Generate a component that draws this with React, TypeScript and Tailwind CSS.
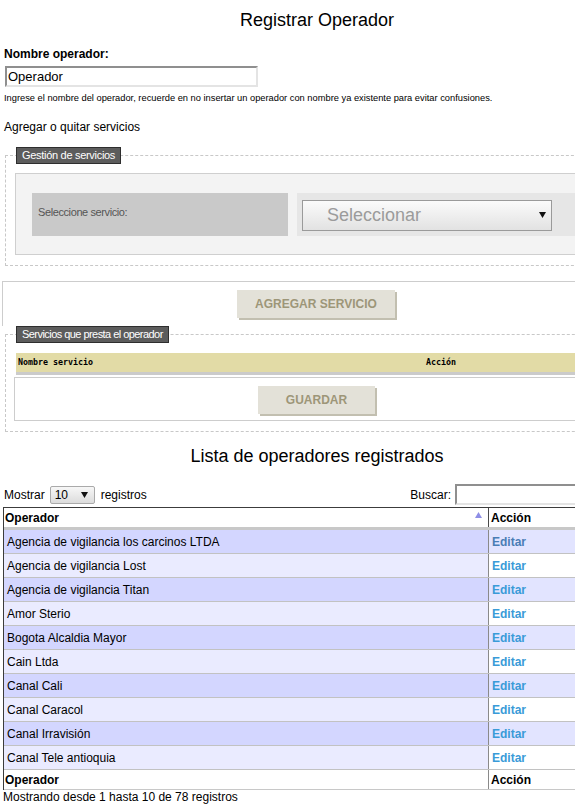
const operadores = [
  "Agencia de vigilancia los carcinos LTDA",
  "Agencia de vigilancia Lost",
  "Agencia de vigilancia Titan",
  "Amor Sterio",
  "Bogota Alcaldia Mayor",
  "Cain Ltda",
  "Canal Cali",
  "Canal Caracol",
  "Canal Irravisión",
  "Canal Tele antioquia",
];

function Caret({ className }: { className?: string }) {
  return (
    <svg width="7" height="6" viewBox="0 0 7 6" className={className}>
      <path d="M0 0 H7 L3.5 6 Z" fill="#111" />
    </svg>
  );
}

function SoftButton({ label, width }: { label: string; width: string }) {
  return (
    <div
      className={`${width} flex h-[28px] items-center justify-center bg-[#e3e1d8] text-[12px] font-bold text-[#9d9678] shadow-[2px_2px_0_#c2bfb0]`}
    >
      {label}
    </div>
  );
}

function Legend({ children, tight }: { children: string; tight?: boolean }) {
  return (
    <legend
      className={`border border-[#2e2e2e] bg-[#5c5c5c] px-[5px] text-[11px] leading-[15px] text-white ${tight ? "tracking-[-0.55px]" : "tracking-[-0.3px]"}`}
    >
      {children}
    </legend>
  );
}

export default function App() {
  return (
    <div className="h-[804px] w-[575px] overflow-hidden bg-white font-['Liberation_Sans',Arial,sans-serif] text-black">
      <div className="w-[634px]">
        <h1 className="pt-[9px] text-center text-[18px] leading-[22px]">Registrar Operador</h1>

        <p className="mt-[16px] pl-[4px] text-[12px] font-bold leading-[14px]">Nombre operador:</p>
        <div className="ml-[5px] mt-[5px] flex h-[21px] w-[253px] items-center border-2 border-t-[#8f8f8f] border-l-[#8f8f8f] border-b-[#e4e4e4] border-r-[#e4e4e4] pl-[1px] text-[13px]">
          Operador
        </div>
        <p className="mt-[6px] pl-[4px] text-[9.3px] leading-[11px]">
          Ingrese el nombre del operador, recuerde en no insertar un operador con nombre ya existente para evitar confusiones.
        </p>

        <p className="mt-[15px] pl-[4px] text-[12px] leading-[16px]">Agregar o quitar servicios</p>

        {/* gestion de servicios */}
        <fieldset className="ml-[5px] mt-[12px] border border-dashed border-[#c8c8c8] px-[10px] pb-[10px]">
          <Legend>Gestión de servicios</Legend>
          <div className="-ml-px mt-[9px] flex h-[82px] items-center gap-[9px] border border-[#cfcfcf] bg-[#f3f3f3] pl-[16px]">
            <div className="h-[43px] w-[256px] bg-[#c9c9c9] pl-[6px] pt-[12px] text-[11px] leading-[14px] tracking-[-0.4px] text-[#555]">
              Seleccione servicio:
            </div>
            <div className="h-[43px] flex-1 bg-[#e6e6e6] pl-[5px] pt-[7px]">
              <div className="flex h-[31px] w-[250px] items-center justify-between border border-[#9a9a9a] bg-gradient-to-b from-[#fbfbfb] to-[#e2e2e2] pl-[24px] pr-[5px] text-[18px] text-[#9b9b9b]">
                Seleccionar
                <Caret />
              </div>
            </div>
          </div>
        </fieldset>

        <div className="ml-[2px] mr-[4px] mt-[15px] flex h-[45px] justify-center border border-b-0 border-[#cdcdcd] pt-[8px]">
          <SoftButton label="AGREGAR SERVICIO" width="w-[158px]" />
        </div>

        {/* servicios del operador */}
        <fieldset className="ml-[5px] mr-[4px] border border-dashed border-[#c8c8c8] px-[10px] pb-[10px]">
          <Legend tight>Servicios que presta el operador</Legend>
          <div className="mt-[10px] flex h-[22px] items-center border-b-[3px] border-[#cbcbcb] bg-[#e2dba6] pl-[2px] font-['DejaVu_Sans_Mono',monospace] text-[8.3px] font-bold">
            <span className="w-[408px]">Nombre servicio</span>
            <span>Acción</span>
          </div>
          <div className="-ml-[2px] mt-[2px] flex h-[44px] justify-center border border-[#cdcdcd] pt-[8px]">
            <SoftButton label="GUARDAR" width="w-[117px]" />
          </div>
        </fieldset>

        <h2 className="mt-[13px] text-center text-[18px] leading-[22px]">Lista de operadores registrados</h2>

        <div className="mt-[17px] flex h-[21px] items-center justify-between pl-[4px] pr-[4px] text-[12px]">
          <div className="flex items-center">
            <span>Mostrar</span>
            <div className="ml-[5px] flex h-[18px] w-[45px] items-center justify-between rounded-[2px] border border-[#aaa] bg-gradient-to-b from-[#f7f7f7] to-[#dcdcdc] pl-[4px] pr-[6px]">
              10
              <Caret />
            </div>
            <span className="ml-[6px]">registros</span>
          </div>
          <div className="flex items-center gap-[4px]">
            <span>Buscar:</span>
            <div className="h-[21px] w-[175px] border-2 border-t-[#8f8f8f] border-l-[#8f8f8f] border-b-[#e4e4e4] border-r-[#e4e4e4]" />
          </div>
        </div>

        {/* tabla */}
        <div className="ml-[3px] mt-[2px] w-[628px] border-l border-t border-[#3c3c3c] text-[12px]">
          <div className="flex h-[22px] border-b-[3px] border-[#c8c8c8] font-bold">
            <div className="flex w-[485px] items-center justify-between border-r border-[#4a4a4a] pl-px pr-[6px]">
              Operador
              <svg width="7" height="6" viewBox="0 0 7 6" className="mb-[6px]">
                <path d="M3.5 0 L7 6 H0 Z" fill="#8e8ee6" />
              </svg>
            </div>
            <div className="flex flex-1 items-center pl-[2px]">Acción</div>
          </div>
          {operadores.map((name, i) => {
            const odd = i % 2 === 0;
            return (
              <div key={name} className="flex h-[24px] border-b border-[#c2c2c2]">
                <div
                  className={`flex w-[485px] items-center border-r border-[#8a8a8a] pl-[3px] ${odd ? "bg-[#d3d6ff]" : "bg-[#eaebff]"}`}
                >
                  {name}
                </div>
                <div
                  className={`flex flex-1 items-center pl-[3px] font-bold ${odd ? "bg-[#e2e4ff]" : "bg-white"} ${i === 0 ? "text-[#4a7db5]" : "text-[#3a9bd8]"}`}
                >
                  Editar
                </div>
              </div>
            );
          })}
          <div className="flex h-[20px] border-b border-[#c8c8c8] font-bold">
            <div className="flex w-[485px] items-center border-r border-[#8a8a8a] pl-px">Operador</div>
            <div className="flex flex-1 items-center pl-[2px]">Acción</div>
          </div>
        </div>
        <p className="pl-[3px] text-[12px] leading-[14px]">Mostrando desde 1 hasta 10 de 78 registros</p>
      </div>
    </div>
  );
}
